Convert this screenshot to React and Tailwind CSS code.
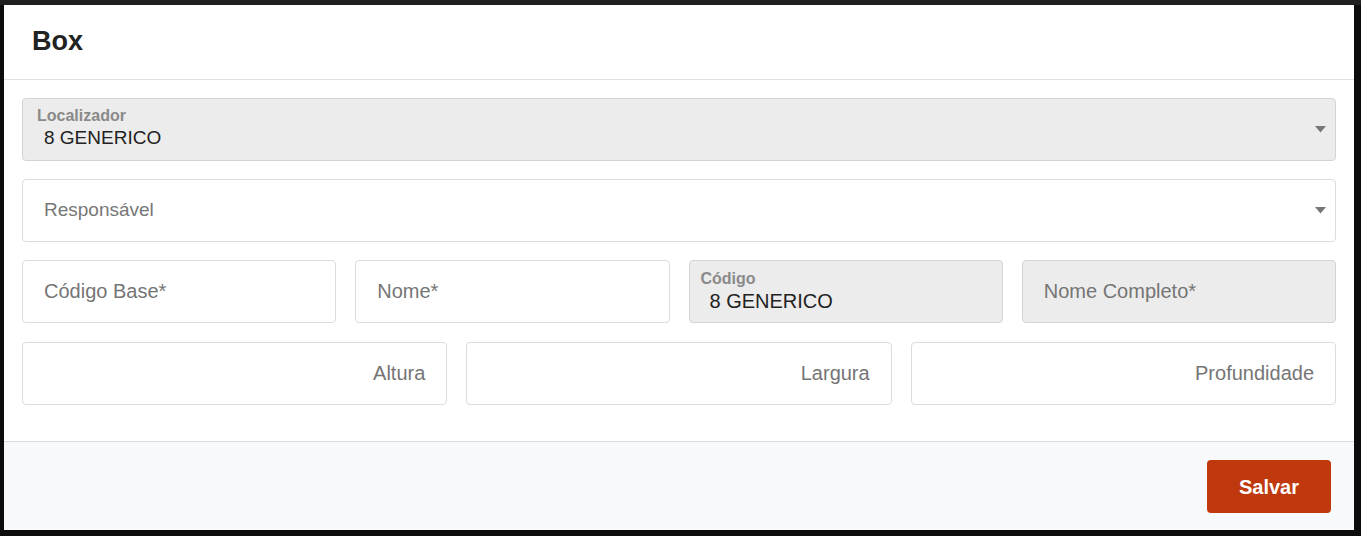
import React from "react";

const font = { fontFamily: '"Liberation Sans", Arial, sans-serif' };

function Caret() {
  return (
    <svg width="11" height="7" viewBox="0 0 11 7" className="shrink-0">
      <path d="M0 0 L11 0 L5.5 6.5 Z" fill="#777" />
    </svg>
  );
}

function SelectLabeled({ label, value }) {
  return (
    <div className="h-[63px] rounded-[4px] border border-[#d4d4d4] bg-[#ececec] flex items-center pr-[9px]">
      <div className="flex-1 flex flex-col pl-[14px] pb-[4px]">
        <span className="text-[16px] leading-none font-bold text-[#8a8a8a]">{label}</span>
        <span className="text-[19px] leading-none text-[#222] pl-[7px] mt-[4px]">{value}</span>
      </div>
      <Caret />
    </div>
  );
}

function SelectPlaceholder({ text }) {
  return (
    <div className="h-[63px] rounded-[4px] border border-[#dcdcdc] bg-white flex items-center pl-[21px] pr-[9px]">
      <span className="flex-1 text-[19px] leading-none text-[#777] mb-[3px]">{text}</span>
      <Caret />
    </div>
  );
}

function Input({ text, disabled, right }) {
  return (
    <div
      className={
        "h-[63px] rounded-[4px] border flex items-center px-[21px] " +
        (disabled ? "bg-[#ececec] border-[#d4d4d4] " : "bg-white border-[#dcdcdc] ") +
        (right ? "justify-end" : "justify-start")
      }
    >
      <span className="text-[20px] leading-none text-[#757575] mb-[2px]">{text}</span>
    </div>
  );
}

function InputLabeled({ label, value }) {
  return (
    <div className="h-[63px] rounded-[4px] border border-[#d4d4d4] bg-[#ececec] flex flex-col justify-center pl-[11px] pb-[2px]">
      <span className="text-[16px] leading-none font-bold text-[#8a8a8a]">{label}</span>
      <span className="text-[20px] leading-none text-[#222] pl-[9px] mt-[4px]">{value}</span>
    </div>
  );
}

export default function App() {
  return (
    <div className="w-[1361px] h-[536px] bg-[#0c0c0c] overflow-hidden relative" style={font}>
      <div className="h-[5px] bg-[#1f1f1f]" />
      <div className="ml-[4px] w-[1350px] h-[525px] bg-white flex flex-col">
        <div className="h-[75px] border-b border-[#e2e2e2] flex items-center pl-[28px] shrink-0">
          <h1 className="text-[27px] font-bold text-[#222] leading-none mt-[-2px]">Box</h1>
        </div>
        <div className="px-[18px] pt-[18px] pb-[36px] flex flex-col gap-[18px] shrink-0 border-b border-[#dcdcdc]">
          <SelectLabeled label="Localizador" value="8 GENERICO" />
          <SelectPlaceholder text="Responsável" />
          <div className="grid grid-cols-4 gap-[19px]">
            <Input text="Código Base*" />
            <Input text="Nome*" />
            <InputLabeled label="Código" value="8 GENERICO" />
            <Input text="Nome Completo*" disabled />
          </div>
          <div className="grid grid-cols-3 gap-[19px] mt-[1px]">
            <Input text="Altura" right />
            <Input text="Largura" right />
            <Input text="Profundidade" right />
          </div>
        </div>
        <div className="flex-1 bg-[#f8f9fa] flex justify-end items-start pt-[18px] pr-[23px]">
          <button className="w-[124px] h-[53px] rounded-[4px] bg-[#c0390e] text-white text-[20px] font-bold leading-none">
            Salvar
          </button>
        </div>
      </div>
    </div>
  );
}
